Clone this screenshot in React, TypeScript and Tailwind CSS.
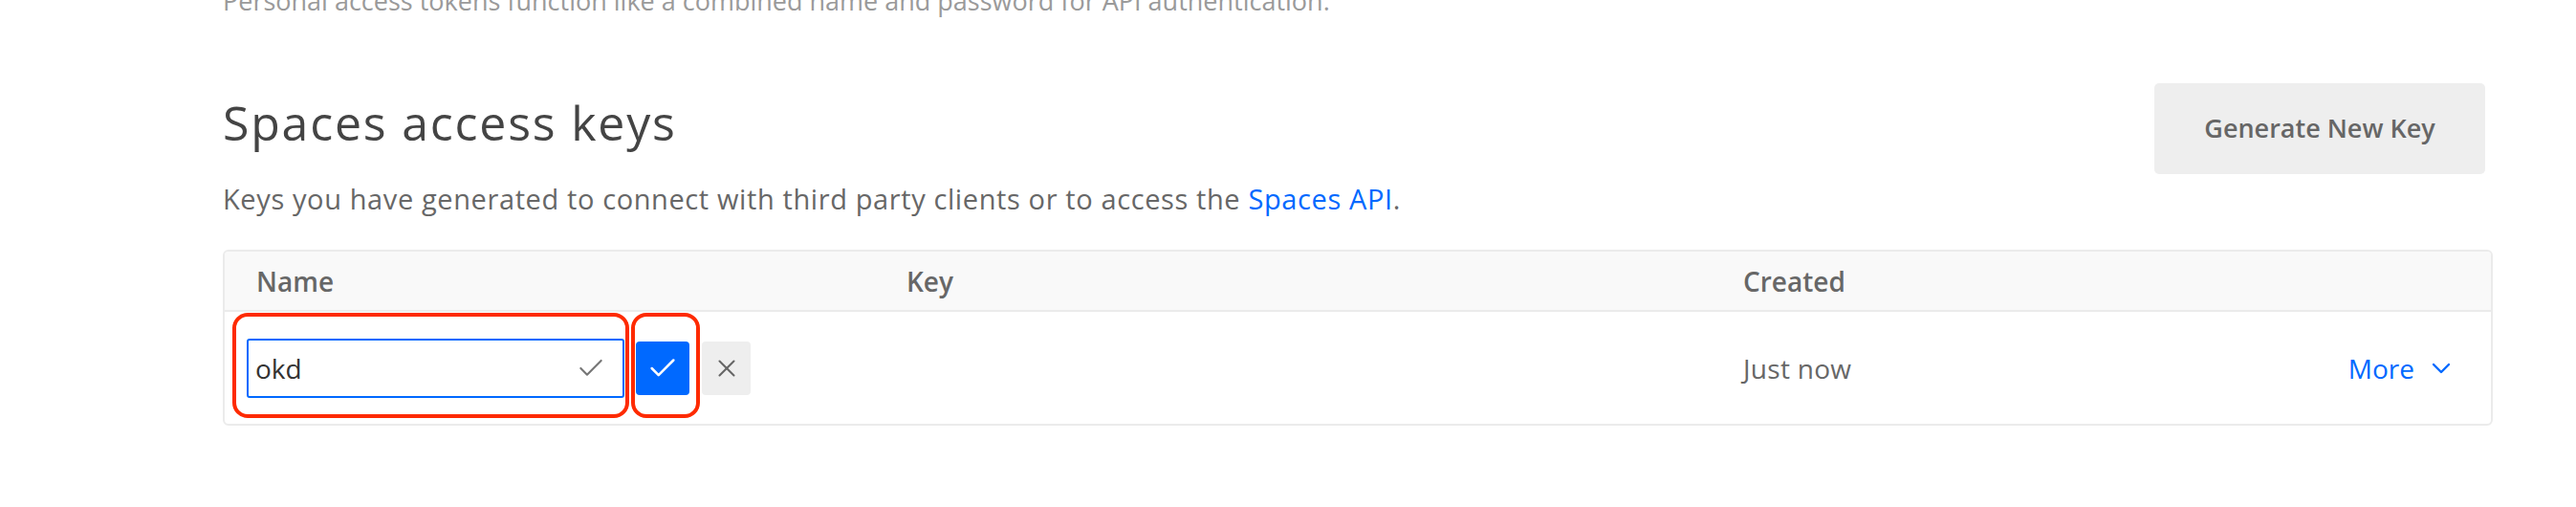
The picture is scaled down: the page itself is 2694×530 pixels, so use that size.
import { Check, ChevronDown, X } from 'lucide-react'

const font = "font-['Open_Sans','Lato',sans-serif]"

function RedMark({ className }: { className: string }) {
  return (
    <span
      className={`pointer-events-none absolute rounded-[16px] border-4 border-[#fe2a00] ${className}`}
    />
  )
}

function KeysTable() {
  return (
    <div className="mt-[39px] overflow-hidden rounded-md border-2 border-[#ebebeb]">
      <div className="grid h-[63px] grid-cols-[680px_875px_1fr] items-center border-b-2 border-[#ebebeb] bg-[#f9f9f9] text-[28px] font-semibold text-[#676767]">
        <div className="pl-[33px]">Name</div>
        <div className="pl-[33px]">Key</div>
        <div className="pl-[33px]">Created</div>
      </div>
      <div className="grid h-[117px] grid-cols-[680px_875px_1fr] items-center text-[28px] text-[#676767]">
        <div className="relative flex items-center pl-[23px]">
          <RedMark className="left-[8px] top-[-27px] h-[110px] w-[415px]" />
          <RedMark className="left-[425px] top-[-27px] h-[110px] w-[72px]" />
          <div className="flex h-[62px] w-[395px] items-center justify-between rounded-[3px] border-2 border-[#0069ff] bg-white pl-[7px] pr-[17px]">
            <span className="text-[28px] text-[#333]">okd</span>
            <Check className="h-[32px] w-[32px] text-[#777]" strokeWidth={1.6} />
          </div>
          <button className="ml-[12px] flex h-[56px] w-[56px] items-center justify-center rounded-[4px] bg-[#0069ff]">
            <Check className="h-[34px] w-[34px] text-white" strokeWidth={1.8} />
          </button>
          <button className="ml-[13px] flex h-[56px] w-[51px] items-center justify-center rounded-[4px] bg-[#eeeeee]">
            <X className="h-[30px] w-[30px] text-[#666]" strokeWidth={1.6} />
          </button>
        </div>
        <div />
        <div className="flex items-center justify-between pl-[33px] pr-[36px]">
          <span className="tracking-[0.01em]">Just now</span>
          <span className="flex items-center gap-[12px] text-[#0069ff]">
            More
            <ChevronDown className="h-[32px] w-[32px]" strokeWidth={1.8} />
          </span>
        </div>
      </div>
    </div>
  )
}

export default function App() {
  return (
    <div className={`h-[530px] w-[2694px] overflow-hidden bg-white ${font}`}>
      <div className="pl-[233px] pr-[87px]">
        <p className="-mt-[19px] text-[27px] leading-[40px] text-[#9a9a9a]">
          Personal access tokens function like a combined name and password for API authentication.
        </p>
        <div className="mt-[82px] flex items-start justify-between">
          <div>
            <h2 className="text-[50px] leading-[50px] tracking-[0.036em] text-[#444]">
              Spaces access keys
            </h2>
            <p className="mt-[41px] text-[29px] leading-[28px] tracking-[0.021em] text-[#676767]">
              Keys you have generated to connect with third party clients or to access the{' '}
              <a className="text-[#0069ff]">Spaces API</a>.
            </p>
          </div>
          <button className="mr-[8px] -mt-[16px] h-[95px] w-[346px] rounded-[5px] bg-[#eeeeee] text-[27px] font-semibold text-[#666]">
            Generate New Key
          </button>
        </div>
        <KeysTable />
      </div>
    </div>
  )
}
